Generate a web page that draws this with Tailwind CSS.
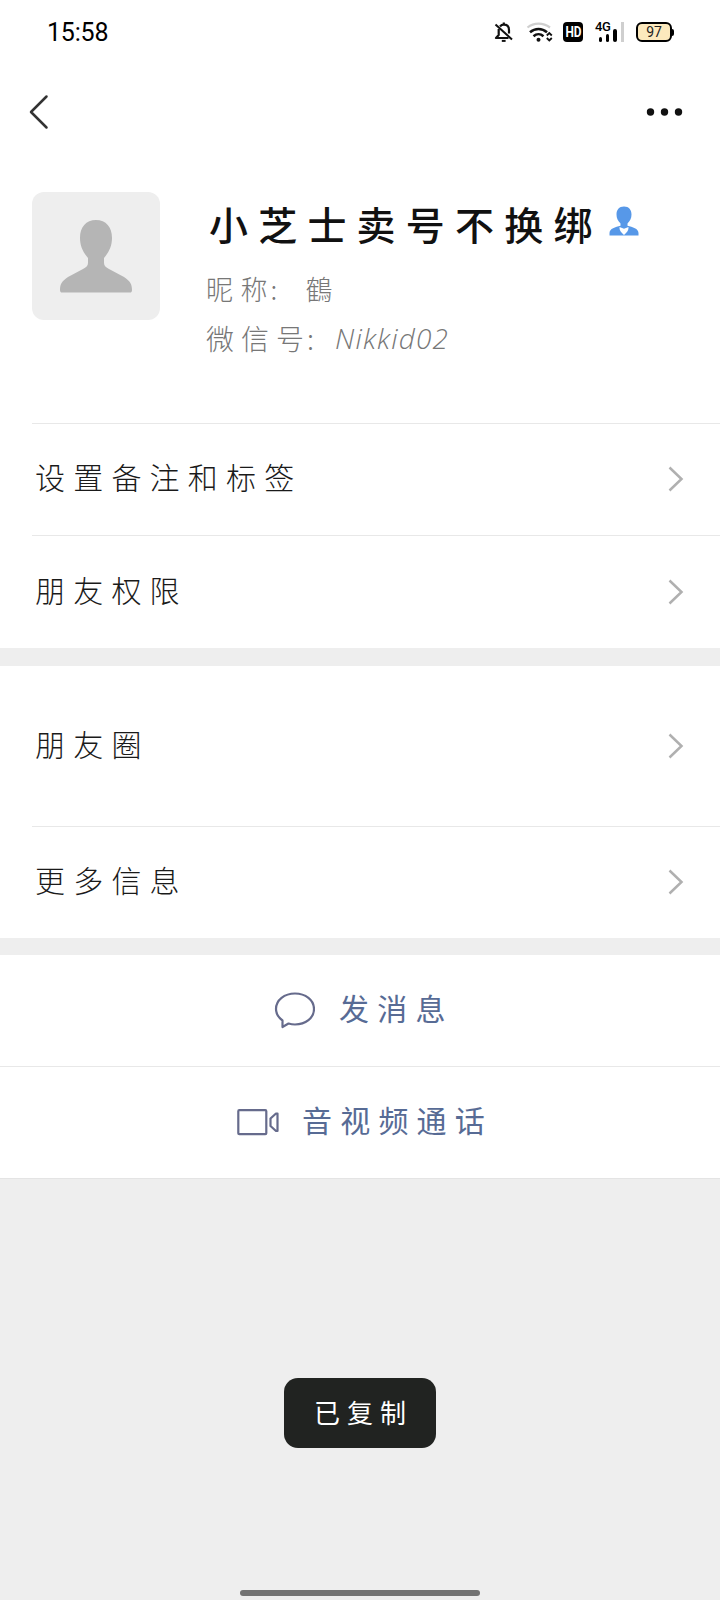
<!DOCTYPE html>
<html lang="zh-CN">
<head>
    <meta charset="UTF-8">
    <meta name="viewport" content="width=device-width, initial-scale=1.0">
    <title>详细资料</title>
    <script src="https://cdn.jsdelivr.net/npm/@tailwindcss/browser@4"></script>
</head>
<body class="bg-[#eeeeee] font-['Noto_Sans_CJK_SC',sans-serif] text-[#1a1a1a]">
<div class="relative flex flex-col w-[720px] h-[1600px] overflow-hidden">

    <!-- Status bar -->
    <div class="flex items-center h-16 shrink-0 bg-white pl-[47px] pr-[46px] font-[Roboto,sans-serif]">
        <span class="text-[25px] leading-none tracking-[-0.200px] text-black">15:58</span>
        <div class="flex items-center ml-auto">
            <svg class="w-5 h-5" viewBox="0 0 20 20" fill="none" stroke="#111" stroke-width="2.2" stroke-linejoin="round">
                <path d="M6 4.5C7 3.3 8.2 2.7 9.8 2.7c3.4 0 5.2 2.300 5.200 5.300v3.500M4.700 7v6L2 16h12.500M9.800 0.500v2"/>
                <path d="M1.500 2.500l16.500 15" stroke-width="2"/>
                <path d="M7.800 18.900h3.800" stroke-width="2"/>
            </svg>
            <svg class="w-7 h-5 ml-3" viewBox="0 0 28 20" fill="none" stroke="#111" stroke-width="2.500">
                <path d="M1.500 5.500C8 0.300 17 0.300 24 5.500" stroke="#cfcfcf" stroke-width="2.200"/>
                <path d="M4 10.300C9 5.800 16 5.800 21 10.300"/>
                <path d="M7.500 14.300c3-2.700 7-2.700 10 0"/>
                <circle cx="12.500" cy="17.800" r="2" fill="#111" stroke="none"/>
                <path d="M20.800 13.500l2.500-2.500 2.500 2.500M20.800 16l2.500 2.500 2.500-2.500" stroke-width="1.800"/>
            </svg>
            <span class="flex items-center justify-center w-5 h-5 ml-[9px] mr-px rounded-[4px] bg-black text-white text-[14px] leading-none font-bold"><span class="scale-x-85">HD</span></span>
            <div class="relative flex items-end gap-1 w-[30px] h-5 ml-[11px] pl-1">
                <span class="absolute left-0 top-0 text-[13px] leading-[10px] tracking-[-0.500px] font-medium text-black">4G</span>
                <i class="w-[3px] h-[5px] rounded-full bg-black"></i>
                <i class="w-[3px] h-2 rounded-full bg-black"></i>
                <i class="w-[4px] h-[13px] rounded-full bg-black"></i>
                <i class="w-[3px] h-5 bg-[#cfcfcf]"></i>
            </div>
            <div class="flex items-center ml-[11px]">
                <span class="flex items-center justify-center w-9 h-5 rounded-[6px] border-2 border-black bg-[#fce9bd] text-[14px] leading-none text-[#222]">97</span>
                <i class="w-[2px] h-[7px] rounded-r-sm bg-black"></i>
            </div>
        </div>
    </div>

    <!-- Nav bar -->
    <div class="flex items-center justify-between h-24 shrink-0 bg-white pl-[29px] pr-[37.500px]">
        <svg class="w-5 h-9" viewBox="0 0 20 36" fill="none" stroke="#333" stroke-width="2.500" stroke-linecap="round" stroke-linejoin="round"><path d="M17.500 2.500L2 18l15.500 15.500"/></svg>
        <svg class="w-[37px] h-2" viewBox="0 0 37 8" fill="#111"><circle cx="4.500" cy="4" r="3.700"/><circle cx="18.500" cy="4" r="3.700"/><circle cx="32.500" cy="4" r="3.700"/></svg>
    </div>

    <!-- Profile -->
    <div class="flex h-[263px] shrink-0 bg-white pt-8 pl-8">
        <div class="w-32 h-32 rounded-xl bg-[#eeeeee]">
            <svg viewBox="0 0 128 128" fill="#b5b5b5"><path d="M64 28c10 0 16 7 16 18 0 8-3 14-8 20v5c0 3 2 4 5 6l15 8c6 4 8 7 8 13 0 2-1 2.500-2 2.500H30c-1 0-2-.5-2-2.500 0-6 2-9 8-13l15-8c3-2 5-3 5-6v-5c-5-6-8-12-8-20 0-11 6-18 16-18z"/></svg>
        </div>
        <div class="ml-[46px] pt-[6px] whitespace-nowrap">
            <div class="flex items-center h-[50px]">
                <h1 class="ml-[3px] text-[39px] leading-[50px] tracking-[10.200px] font-medium text-[#111]">小芝士卖号不换绑</h1>
                <svg class="w-[30px] h-[30px] ml-[6px] -mt-[5px]" viewBox="0 0 30 30" fill="#5798e8">
                    <path d="M15 .5c5 0 7.500 3.500 7.500 8 0 4-1.500 6.500-4 9v2.200c5 1.300 11 2.800 11 7.300v2.500H.5V27c0-4.500 6-6 11-7.300v-2.200c-2.500-2.500-4-5-4-9 0-4.500 2.500-8 7.500-8z"/>
                    <path d="M10.500 21l4.500 1.800 4.500-1.800c.3 3-1.500 5.500-4.500 8-3-2.500-4.800-5-4.500-8z" fill="#fff"/>
                </svg>
            </div>
            <p class="flex mt-[25px] h-8 leading-8 text-[27px] font-light text-[#777]"><span class="tracking-[7.500px]">昵</span><span class="tracking-[3px]">称</span><span class="w-[35px]">:</span><span>鶴</span></p>
            <p class="flex mt-[17px] h-8 leading-8 text-[28px] font-light text-[#777]"><span class="tracking-[7px]">微信</span><span class="tracking-[3px]">号</span><span class="w-7">:</span><span class="font-['Open_Sans',sans-serif] italic tracking-[1.200px]">Nikkid02</span></p>
        </div>
    </div>

    <!-- Settings -->
    <div class="shrink-0 bg-white pl-8 text-[30px] tracking-[8.200px] font-light">
        <div class="flex items-center justify-between h-28 border-t border-[#e8e8e8] pl-[3px] pr-9 pb-[2px]">
            <span class="-mt-1">设置备注和标签</span>
            <svg class="w-4 h-[26px]" viewBox="0 0 16 26" fill="none" stroke="#b0b0b0" stroke-width="2.500"><path d="M1.500 1.500L13.500 13 1.500 24.500"/></svg>
        </div>
        <div class="flex items-center justify-between h-[113px] border-t border-[#e8e8e8] pl-[3px] pr-9">
            <span class="-mt-[6px]">朋友权限</span>
            <svg class="w-4 h-[26px]" viewBox="0 0 16 26" fill="none" stroke="#b0b0b0" stroke-width="2.500"><path d="M1.500 1.500L13.500 13 1.500 24.500"/></svg>
        </div>
    </div>

    <div class="shrink-0 mt-[18px] bg-white pl-8 text-[30px] tracking-[8.200px] font-light">
        <div class="flex items-center justify-between h-40 pl-[3px] pr-9">
            <span class="-mt-[6px]">朋友圈</span>
            <svg class="w-4 h-[26px]" viewBox="0 0 16 26" fill="none" stroke="#b0b0b0" stroke-width="2.500"><path d="M1.500 1.500L13.500 13 1.500 24.500"/></svg>
        </div>
        <div class="flex items-center justify-between h-28 border-t border-[#e8e8e8] pl-[3px] pr-9 pb-[2px]">
            <span class="-mt-1">更多信息</span>
            <svg class="w-4 h-[26px]" viewBox="0 0 16 26" fill="none" stroke="#b0b0b0" stroke-width="2.500"><path d="M1.500 1.500L13.500 13 1.500 24.500"/></svg>
        </div>
    </div>

    <!-- Actions -->
    <div class="shrink-0 mt-[17px] bg-white border-b border-[#e4e4e4] text-[30px] tracking-[8.200px] text-[#576b95]">
        <div class="flex items-center h-[111px] pl-[273px] pb-[2px]">
            <svg class="w-[42px] h-[38px]" viewBox="0 0 42 38" fill="none" stroke="#666b8c" stroke-width="2.200" stroke-linejoin="round"><path d="M9.500 36v-6.500C5.500 26.500 3 22.500 3 18 3 9 11.500 2.500 22 2.500S41 9 41 18 32.500 33.500 22 33.500c-2.500 0-4.500-.4-6.500-1z"/></svg>
            <span class="ml-6 -mt-1">发消息</span>
        </div>
        <div class="flex items-center h-28 border-t border-[#e8e8e8] pl-[236px] pb-[2px]">
            <svg class="w-[44px] h-[28px]" viewBox="0 0 44 28" fill="none" stroke="#666b8c" stroke-width="2.200" stroke-linejoin="round"><rect x="2.300" y="2.200" width="28" height="24" rx="1"/><path d="M41.500 5.500v17.500h-1.500l-5.500-5v-7.500l5.500-5z"/></svg>
            <span class="ml-[22px] -mt-1">音视频通话</span>
        </div>
    </div>

    <!-- Toast -->
    <div class="absolute left-[284px] top-[1378px] flex items-center justify-center w-[152px] h-[70px] rounded-[14px] bg-[#212321] pl-[7px] pb-1 text-[26px] tracking-[7px] text-white">已复制</div>

    <!-- Home indicator -->
    <div class="absolute left-60 top-[1590px] w-60 h-[6px] rounded-full bg-[#737373]"></div>
</div>
</body>
</html>
